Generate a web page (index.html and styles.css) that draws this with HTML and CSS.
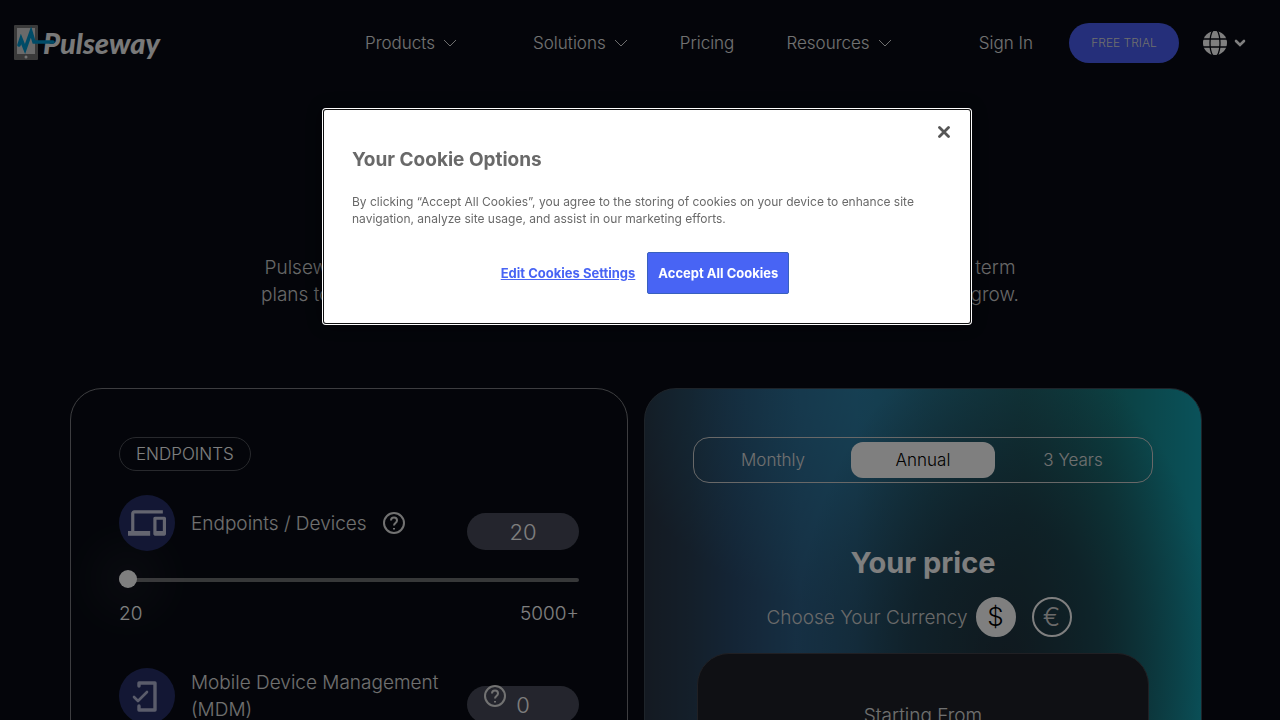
FILE: index.html
```
<!DOCTYPE html>
<html lang="en">
<head>
    <meta charset="UTF-8">
    <meta name="viewport" content="width=device-width, initial-scale=1.0">
    <title>Pulseway Pricing</title>
    <link rel="stylesheet" href="styles.css">
</head>
<body>
    <div class="page">
        <header class="header">
            <a href="#" class="logo" aria-label="Pulseway">
                <svg width="150" height="38" viewBox="0 0 150 38">
                    <rect x="0" y="1" width="24" height="35" rx="1" fill="#757575"/>
                    <rect x="3" y="4" width="18" height="26" fill="#d4d4d4"/>
                    <circle cx="12" cy="33" r="1.5" fill="#e8e8e8"/>
                    <text x="29" y="30" class="logo-text">Pulseway</text>
                    <path d="M5 21 L7 15 L11 25 L17 8 L20 18 H39" fill="none" stroke="#0097cf" stroke-width="3.600" stroke-linecap="round"/>
                </svg>
            </a>

            <nav class="nav">
                <button class="nav-item nav-products">Products
                    <svg width="14" height="8" viewBox="0 0 14 8"><path d="M1 1l6 6 6-6"/></svg>
                </button>
                <button class="nav-item">Solutions
                    <svg width="14" height="8" viewBox="0 0 14 8"><path d="M1 1l6 6 6-6"/></svg>
                </button>
                <a href="#" class="nav-item">Pricing</a>
                <button class="nav-item">Resources
                    <svg width="14" height="8" viewBox="0 0 14 8"><path d="M1 1l6 6 6-6"/></svg>
                </button>
            </nav>

            <div class="header-actions">
                <a href="#" class="nav-item">Sign In</a>
                <a href="#" class="trial-button">FREE TRIAL</a>
                <button class="language" aria-label="Language">
                    <svg width="24" height="24" viewBox="0 0 24 24">
                        <circle cx="12" cy="12" r="12" fill="#fff"/>
                        <g fill="none" stroke="#080b14" stroke-width="1.3">
                            <path d="M0 8h24M0 16h24"/>
                            <path d="M10 -1C6 5 6 19 10 25M14 -1c4 6 4 20 0 26"/>
                        </g>
                    </svg>
                    <svg width="12" height="8" viewBox="0 0 12 8"><path d="M2 2l4 4 4-4" fill="none" stroke="#fff" stroke-width="2.6" stroke-linecap="round"/></svg>
                </button>
            </div>
        </header>

        <main>
            <section class="hero">
                <p>Pulseway offers flexible pricing made for your whole team, with annual and long term<br>
                plans to match your budget and everything you need to help your own business grow.</p>
            </section>

            <section class="pricing">
                <div class="card">
                    <span class="badge">ENDPOINTS</span>

                    <div class="product">
                        <div class="product-row">
                            <div class="product-info">
                                <span class="product-icon">
                                    <svg width="38" height="38" viewBox="0 0 24 24" fill="#c9cbe0"><path d="M4 6h18V4H4c-1.100 0-2 .9-2 2v11H0v3h14v-3H4V6zm19 2h-6c-.55 0-1 .45-1 1v10c0 .55.45 1 1 1h6c.55 0 1-.45 1-1V9c0-.55-.45-1-1-1zm-1 9h-4v-7h4v7z"/></svg>
                                </span>
                                <label for="endpoints">Endpoints / Devices</label>
                                <button class="help" aria-label="About endpoints">
                                    <svg width="22" height="22" viewBox="0 0 22 22"><circle cx="11" cy="11" r="10"/><path d="M8 8.500c0-4 6-4 6 0 0 2.500-3 2.500-3 5M11 16v1.500"/></svg>
                                </button>
                            </div>
                            <input class="amount" type="text" id="endpoints" value="20">
                        </div>
                        <input class="slider" type="range" min="20" max="5000" value="20" aria-label="Number of endpoints">
                        <div class="range-labels"><span>20</span><span>5000+</span></div>
                    </div>

                    <div class="product">
                        <div class="product-row">
                            <div class="product-info">
                                <span class="product-icon">
                                    <svg width="32" height="32" viewBox="0 0 32 32" fill="none" stroke="#b4b8d6" stroke-width="3" stroke-linecap="round" stroke-linejoin="round"><path d="M8 6V3h16v27H8v-4" stroke-width="3.400"/><path d="M3 17l4 4 9-9" stroke-width="2.600"/></svg>
                                </span>
                                <label for="mdm">Mobile Device Management (MDM)</label>
                                <button class="help" aria-label="About mobile device management">
                                    <svg width="22" height="22" viewBox="0 0 22 22"><circle cx="11" cy="11" r="10"/><path d="M8 8.500c0-4 6-4 6 0 0 2.500-3 2.500-3 5M11 16v1.500"/></svg>
                                </button>
                            </div>
                            <input class="amount" type="text" id="mdm" value="0">
                        </div>
                    </div>
                </div>

                <div class="card price-card">
                    <div class="periods">
                        <button class="period">Monthly</button>
                        <button class="period active">Annual</button>
                        <button class="period">3 Years</button>
                    </div>
                    <h2>Your price</h2>
                    <div class="currency">
                        <span>Choose Your Currency</span>
                        <button class="currency-button active">$</button>
                        <button class="currency-button">€</button>
                    </div>
                    <div class="price-panel">Starting From</div>
                </div>
            </section>
        </main>
    </div>

    <!-- Cookie consent -->
    <div class="overlay">
        <div class="cookie-modal" role="dialog" aria-modal="true" aria-labelledby="cookieTitle">
            <button class="close-button" aria-label="Close">
                <svg width="12" height="12" viewBox="0 0 12 12"><path d="M1.500 1.500l9 9M10.500 1.500l-9 9" stroke="#565656" stroke-width="2.800" stroke-linecap="round"/></svg>
            </button>
            <h2 id="cookieTitle">Your Cookie Options</h2>
            <p>By clicking “Accept All Cookies”, you agree to the storing of cookies on your device to enhance site navigation, analyze site usage, and assist in our marketing efforts.</p>
            <div class="cookie-actions">
                <button class="settings-button">Edit Cookies Settings</button>
                <button class="accept-button">Accept All Cookies</button>
            </div>
        </div>
    </div>
</body>
</html>
```
FILE: styles.css
```
* {
    box-sizing: border-box;
}

body {
    margin: 0;
    font-family: Inter, "Open Sans", sans-serif;
    background-color: #080b14;
    color: #fff;
}

button,
input {
    font-family: inherit;
    color: inherit;
}

button {
    padding: 0;
    background: none;
    border: none;
    cursor: pointer;
}

a {
    color: inherit;
    text-decoration: none;
}

.page {
    height: 100vh;
    overflow: hidden;
}

/* Header */
.header {
    display: flex;
    align-items: center;
    height: 86px;
    padding: 0 34px 0 14px;
}

.logo {
    display: flex;
}

.logo-text {
    font-family: Lato, sans-serif;
    font-size: 29px;
    font-weight: 900;
    font-style: italic;
    fill: #f2f2f2;
}

.nav {
    display: flex;
    gap: 52px;
    margin-left: 201px;
}

.nav-item {
    display: flex;
    align-items: center;
    gap: 8px;
    font-size: 17px;
    font-weight: 300;
    line-height: 24px;
    color: #e4e4e4;
}

.nav-products {
    margin-right: 24px;
}

.nav-item svg {
    fill: none;
    stroke: #dcdcdc;
}

.header-actions {
    display: flex;
    align-items: center;
    margin-left: auto;
}

.trial-button {
    width: 110px;
    margin: 0 24px 0 36px;
    border-radius: 20px;
    background-color: #4a5ef4;
    color: #dcdcdc;
    font-size: 12px;
    font-weight: 300;
    line-height: 40px;
    text-align: center;
}

.language {
    display: flex;
    align-items: center;
    gap: 7px;
}

/* Hero */
.hero {
    padding: 168px 20px 80px;
    text-align: center;
}

.hero p {
    margin: 0;
    font-size: 19px;
    font-weight: 300;
    line-height: 27px;
    color: #d0d0d0;
}

/* Pricing */
.pricing {
    display: grid;
    grid-template-columns: 1fr 1fr;
    gap: 16px;
    max-width: 1140px;
    margin: 0 auto;
    padding-right: 8px;
}

.card {
    padding: 48px;
    border: 1px solid #7a7b80;
    border-radius: 32px;
}

.badge {
    display: inline-block;
    padding: 0 16px;
    border: 1px solid #50525a;
    border-radius: 17px;
    font-size: 17px;
    font-weight: 300;
    line-height: 32px;
}

.product {
    margin-top: 24px;
}

.product + .product {
    margin-top: 42px;
}

/* The info block and the amount share the middle column */
.product-row {
    display: grid;
    grid-template-columns: 1fr 39px 73px;
}

.product-info {
    grid-area: 1 / 1 / 2 / 3;
    z-index: 1;
    display: flex;
    align-items: center;
    gap: 16px;
    height: 56px;
    font-size: 19px;
    font-weight: 300;
    line-height: 27px;
    color: #e0e0e0;
}

.product-icon {
    display: flex;
    flex: none;
    align-items: center;
    justify-content: center;
    width: 56px;
    height: 56px;
    border-radius: 50%;
    background-color: #262f68;
}

.help {
    display: flex;
}

.help svg {
    fill: none;
    stroke: #e4e4e4;
    stroke-width: 2;
}

.amount {
    grid-area: 1 / 2 / 2 / 4;
    width: 100%;
    height: 37px;
    margin-top: 18px;
    padding: 0;
    border: none;
    border-radius: 19px;
    background-color: #484b5a;
    font-size: 22px;
    font-weight: 300;
    text-align: center;
}

.slider {
    appearance: none;
    display: block;
    width: 100%;
    height: 20px;
    margin: 19px 0 12px;
    background: none;
}

.slider::-webkit-slider-runnable-track {
    height: 4px;
    border-radius: 2px;
    background-color: #6f7073;
}

.slider::-webkit-slider-thumb {
    appearance: none;
    width: 18px;
    height: 18px;
    margin-top: -8px;
    border-radius: 50%;
    background-color: #fff;
    box-shadow: 0 0 50px 25px rgba(255,255,255,0.06);
}

.range-labels {
    display: flex;
    justify-content: space-between;
    font-size: 19px;
    font-weight: 300;
    line-height: 24px;
}

.price-card {
    border-color: #3c4854;
    text-align: center;
    background:
        radial-gradient(ellipse 210px 320px at 360px 270px, rgba(32,48,60,0.95), rgba(30,46,62,0.65) 45%, transparent),
        radial-gradient(ellipse 260px 220px at 220px 0, rgba(44,144,184,0.5), transparent),
        linear-gradient(90deg, #283444 0, #283e54 8%, #294a6c 16%, #2c6088 28%, #2c6c92 38%, #246878 52%, #1e6464 68%, #188084 84%, #14a4b4 100%);
}

.periods {
    display: flex;
    gap: 6px;
    padding: 4px 7px;
    border: 1px solid #d0d0d0;
    border-radius: 16px;
}

.period {
    flex: 1;
    border-radius: 12px;
    color: #e0e0e0;
    font-size: 17px;
    font-weight: 300;
    line-height: 36px;
}

.period.active {
    background-color: #fff;
    color: #000;
}

.price-card h2 {
    margin: 62px 0 16px;
    font-size: 29px;
    line-height: 36px;
}

.currency {
    display: flex;
    align-items: center;
    justify-content: center;
    color: #d4d4d4;
    font-size: 19px;
    font-weight: 300;
}

.currency-button {
    width: 40px;
    height: 40px;
    margin: 0 8px;
    border: 2px solid #fff;
    border-radius: 50%;
    font-size: 26px;
    font-weight: 300;
    line-height: 36px;
}

.currency-button.active {
    background-color: #fff;
    color: #000;
}

.price-panel {
    margin: 16px 4px 0;
    padding: 48px;
    border: 1px solid #404048;
    border-radius: 32px;
    background-color: #1e2028;
    color: #e0e0e0;
    font-size: 19px;
    font-weight: 300;
    line-height: 27px;
}

/* Cookie consent */
.overlay {
    position: fixed;
    inset: 0;
    z-index: 10;
    display: flex;
    align-items: flex-start;
    justify-content: center;
    padding: 110px 0 0 14px;
    background-color: rgba(0,0,0,0.5);
}

.cookie-modal {
    display: flex;
    flex-direction: column;
    width: 646px;
    padding: 16px 20px 29px 28px;
    border-radius: 2px;
    background-color: #fff;
    color: #696969;
    box-shadow: 0 0 0 1px #101010, 0 0 0 2px #fff, 0 0 18px rgba(0,0,0,0.6);
}

.close-button {
    display: flex;
    align-self: flex-end;
    margin-bottom: 8px;
}

.cookie-modal h2 {
    margin: 0 0 20px;
    font-size: 19px;
    line-height: 27px;
}

.cookie-modal p {
    margin: 0 30px 0 0;
    font-size: 12px;
    line-height: 17px;
}

.cookie-actions {
    display: flex;
    justify-content: center;
    gap: 12px;
    margin: 25px 12px 0 0;
}

.settings-button,
.accept-button {
    font-size: 13px;
    font-weight: 700;
}

.settings-button {
    color: #4864f4;
    text-decoration: underline;
}

.accept-button {
    height: 42px;
    padding: 0 10px;
    border: 1px solid #3860be;
    border-radius: 2px;
    background-color: #4864f4;
    color: #fff;
}
```
